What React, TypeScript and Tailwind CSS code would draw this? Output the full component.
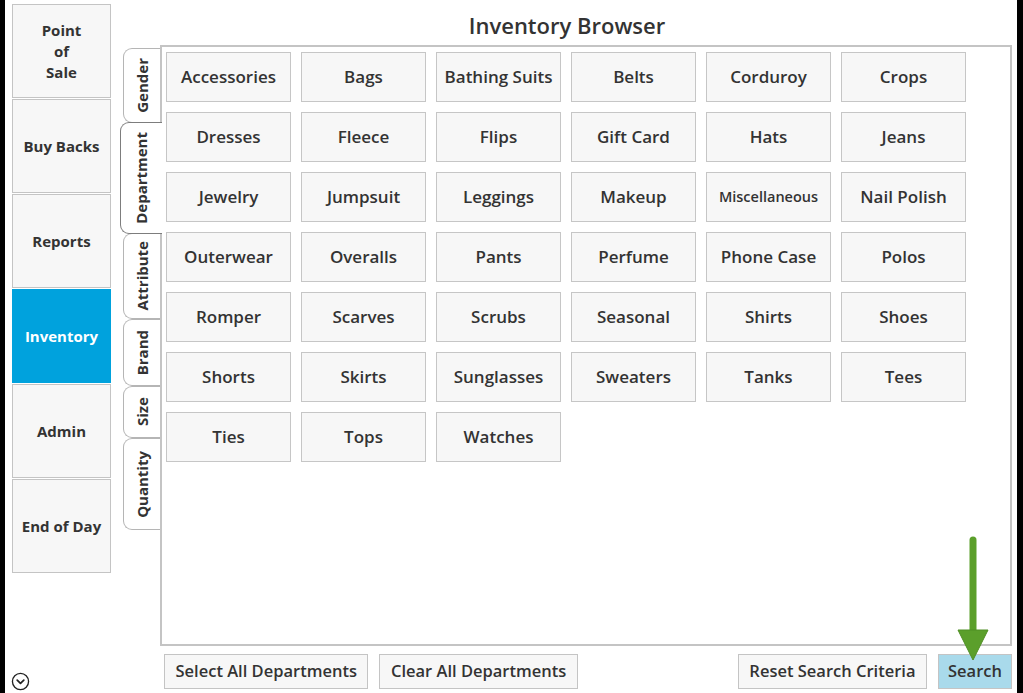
import React from "react";

const navItems = [
  { label: "Point\nof\nSale" },
  { label: "Buy Backs" },
  { label: "Reports" },
  { label: "Inventory", active: true },
  { label: "Admin" },
  { label: "End of Day" },
];

const tabs = [
  { label: "Gender", h: "h-[75px]" },
  { label: "Department", h: "h-[112px]", active: true },
  { label: "Attribute", h: "h-[86px]" },
  { label: "Brand", h: "h-[67px]" },
  { label: "Size", h: "h-[52px]" },
  { label: "Quantity", h: "h-[92px]" },
];

const departments = [
  "Accessories", "Bags", "Bathing Suits", "Belts", "Corduroy", "Crops",
  "Dresses", "Fleece", "Flips", "Gift Card", "Hats", "Jeans",
  "Jewelry", "Jumpsuit", "Leggings", "Makeup", "Miscellaneous", "Nail Polish",
  "Outerwear", "Overalls", "Pants", "Perfume", "Phone Case", "Polos",
  "Romper", "Scarves", "Scrubs", "Seasonal", "Shirts", "Shoes",
  "Shorts", "Skirts", "Sunglasses", "Sweaters", "Tanks", "Tees",
  "Ties", "Tops", "Watches",
];

const font = { fontFamily: '"Open Sans", "Noto Sans", sans-serif' };

const barBtn =
  "h-[35px] px-[10.5px] flex items-center bg-[#f7f7f7] border border-[#c4c4c4] text-[16.5px] font-semibold";

export default function App() {
  return (
    <div className="w-[1023px] h-[693px] bg-black pl-[5px] pr-[6px] overflow-hidden" style={font}>
      <div className="relative flex h-full bg-white text-[#333]">
        {/* left nav */}
        <div className="flex flex-col ml-[7px] mt-[4px] w-[99px] gap-[1px]">
          {navItems.map((n) => (
            <div
              key={n.label}
              className={
                "h-[94px] flex items-center justify-center text-center whitespace-pre-line text-[15px] font-bold leading-[21px] border " +
                (n.active
                  ? "bg-[#00a2dd] border-[#00a2dd] text-white"
                  : "bg-[#f7f7f7] border-[#c4c4c4] text-[#333]")
              }
            >
              {n.label}
            </div>
          ))}
          <div className="flex-1" />
          <div className="mb-[2px] -ml-[1px]">
            <svg width="19" height="19" viewBox="0 0 20 20" fill="none" stroke="#222" strokeWidth="1.4">
              <circle cx="10" cy="10" r="8.5" />
              <path d="M6.5 8.5 L10 12 L13.5 8.5" strokeWidth="1.8" strokeLinecap="round" strokeLinejoin="round" />
            </svg>
          </div>
        </div>

        {/* main column */}
        <div className="flex flex-col ml-[11px] mr-[5px] flex-1">
          <div className="h-[45px] flex items-center justify-center text-[22px] font-semibold text-[#333] pt-[6px]">
            Inventory Browser
          </div>
          <div className="flex h-[601px]">
            <div className="w-[38px] flex flex-col pt-[3px] relative z-10">
              {tabs.map((t) => (
                <div
                  key={t.label}
                  className={
                    t.h +
                    " flex items-center justify-center rounded-l-[9px] border border-r-0 " +
                    (t.active
                      ? "bg-white border-[#7d7d7d] border-[1.5px] -ml-[2px] mr-[-2px] -my-[1px] relative"
                      : "bg-white border-[#b5b5b5] ml-[1px]")
                  }
                >
                  <span className="[writing-mode:vertical-rl] rotate-180 text-[15px] font-bold text-[#333]">
                    {t.label}
                  </span>
                </div>
              ))}
            </div>
            <div className="flex-1 border-2 border-[#c4c4c4] pl-[4px] pt-[5px]">
              <div className="grid grid-cols-[repeat(6,125px)] gap-x-[10px] gap-y-[10px]">
                {departments.map((d) => (
                  <div
                    key={d}
                    className={
                      "h-[50px] flex items-center justify-center bg-[#f7f7f7] border border-[#c6c6c6] font-semibold whitespace-nowrap " +
                      (d === "Miscellaneous" ? "text-[14.5px]" : "text-[17px]")
                    }
                  >
                    {d}
                  </div>
                ))}
              </div>
            </div>
          </div>
          <div className="flex items-center gap-[11px] mt-[8px] pl-[42px]">
            <div className={barBtn}>Select All Departments</div>
            <div className={barBtn}>Clear All Departments</div>
            <div className="flex-1" />
            <div className={barBtn}>Reset Search Criteria</div>
            <div className="h-[35px] w-[74px] flex items-center justify-center bg-[#a9daeb] border border-[#c4c4c4] text-[16.5px] font-semibold">
              Search
            </div>
          </div>
        </div>

        {/* annotation arrow */}
        <svg className="absolute left-[950px] top-[534px]" width="36" height="130" viewBox="0 0 36 130">
          <line x1="18" y1="6" x2="18" y2="100" stroke="#5b9f2b" strokeWidth="7" strokeLinecap="round" />
          <path d="M3 96 L33 96 L18 126 Z" fill="#5b9f2b" stroke="#4f8f24" strokeWidth="1" strokeLinejoin="round" />
        </svg>
      </div>
    </div>
  );
}
